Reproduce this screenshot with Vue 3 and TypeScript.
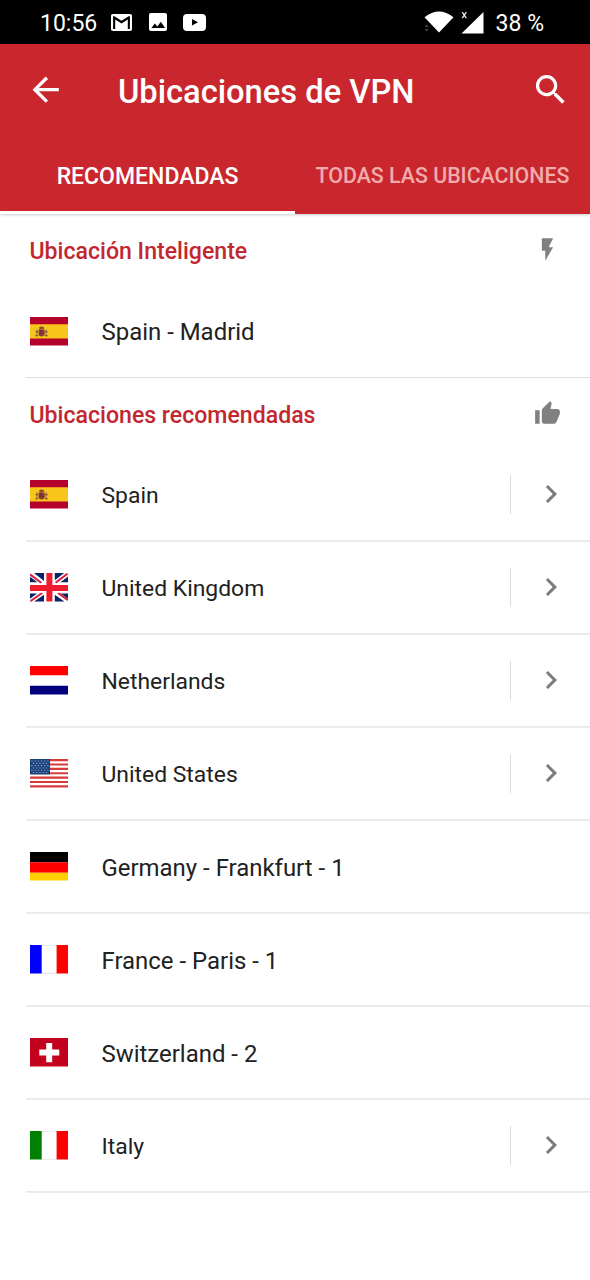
<script setup lang="ts">
type Country = 'es' | 'gb' | 'nl' | 'us' | 'de' | 'fr' | 'ch' | 'it'

interface Location {
  name: string
  flag: Country
  expandable: boolean
}

interface Section {
  title: string
  icon: 'bolt' | 'thumb'
  locations: Location[]
}

const sections: Section[] = [
  {
    title: 'Ubicación Inteligente',
    icon: 'bolt',
    locations: [{ name: 'Spain - Madrid', flag: 'es', expandable: false }],
  },
  {
    title: 'Ubicaciones recomendadas',
    icon: 'thumb',
    locations: [
      { name: 'Spain', flag: 'es', expandable: true },
      { name: 'United Kingdom', flag: 'gb', expandable: true },
      { name: 'Netherlands', flag: 'nl', expandable: true },
      { name: 'United States', flag: 'us', expandable: true },
      { name: 'Germany - Frankfurt - 1', flag: 'de', expandable: false },
      { name: 'France - Paris - 1', flag: 'fr', expandable: false },
      { name: 'Switzerland - 2', flag: 'ch', expandable: false },
      { name: 'Italy', flag: 'it', expandable: true },
    ],
  },
]
</script>

<template>
  <div class="screen">
    <div class="status">
      <span class="clock">10:56</span>
      <svg class="mail" viewBox="2 4 20 16" preserveAspectRatio="none"><path d="M20 4H4c-1.1 0-2 .7-2 1.6v12.8c0 .9.9 1.6 2 1.6h16c1.1 0 2-.7 2-1.6V5.6c0-.9-.9-1.6-2-1.6zm0 14h-2V9.25L12 13 6 9.25V18H4V6h1.2l6.8 4.25L18.8 6H20v12z" fill="#fff" /></svg>
      <svg class="photo" viewBox="0 0 18 18"><rect width="18" height="18" rx="2" fill="#fff" /><path d="M2.4 15l3.4-4.5 2.6 3 3.4-4.7 4.3 6.2z" fill="#000" /></svg>
      <svg class="video" viewBox="0 0 23 17"><rect width="23" height="17" rx="4" fill="#fff" /><path d="M9 5l6 3.3L9 11.6z" fill="#000" /></svg>
      <span class="spacer"></span>
      <svg class="wifi" viewBox="0 0 30 22"><path d="M0.5 6.2Q15-5.2 29.5 6.2L15 21.5z" fill="#fff" /><path d="M.8 16l2-2.5 2 2.5zM.8 18l2 2.5 2-2.5z" fill="#444" /></svg>
      <svg class="signal" viewBox="0 0 23 23"><path d="M22.5 1v21.5H0.5z" fill="#fff" /><path d="M1.3 1.2l4 6M5.3 1.2l-4 6" stroke="#eee" stroke-width="1.3" /></svg>
      <span class="battery">38 %</span>
    </div>

    <header class="header">
      <div class="toolbar">
        <svg class="nav-icon" viewBox="0 0 24 24"><path d="M20 11H7.83l5.59-5.59L12 4l-8 8 8 8 1.41-1.41L7.83 13H20v-2z" fill="#fff" /></svg>
        <h1 class="title">Ubicaciones de VPN</h1>
        <svg class="nav-icon" viewBox="0 0 24 24"><path d="M15.5 14h-.79l-.28-.27C15.41 12.59 16 11.11 16 9.5 16 5.91 13.09 3 9.5 3S3 5.91 3 9.5 5.91 16 9.5 16c1.61 0 3.09-.59 4.23-1.57l.27.28v.79l5 4.99L20.49 19l-4.99-5zm-6 0C7.01 14 5 11.99 5 9.5S7.01 5 9.5 5 14 7.01 14 9.5 11.99 14 9.5 14z" fill="#fff" /></svg>
      </div>
      <nav class="tabs">
        <div class="tab active">RECOMENDADAS</div>
        <div class="tab">TODAS LAS UBICACIONES</div>
      </nav>
    </header>

    <main class="content">
      <section v-for="section in sections" :key="section.title" :class="section.icon">
        <div class="section-head">
          <h2>{{ section.title }}</h2>
          <svg class="section-icon" viewBox="0 0 24 24">
            <path v-if="section.icon === 'bolt'" d="M7 2v11h3v9l7-12h-4l4-8z" fill="#808080" />
            <path v-else d="M1 21h4V9H1v12zm22-11c0-1.1-.9-2-2-2h-6.31l.95-4.57.03-.32c0-.41-.17-.79-.44-1.06L14.17 1 7.59 7.59C7.22 7.95 7 8.45 7 9v10c0 1.1.9 2 2 2h9c.83 0 1.54-.5 1.84-1.22l3.02-7.05c.09-.23.14-.47.14-.73v-2z" fill="#808080" />
          </svg>
        </div>
        <div v-for="location in section.locations" :key="location.name" class="row" :class="{ expandable: location.expandable }">
          <svg class="flag" viewBox="0 0 38 28" preserveAspectRatio="none">
            <g v-if="location.flag === 'es'">
              <path d="M0 0h38v28H0z" fill="#b5002b" /><path d="M0 7h38v14H0z" fill="#f8c51c" />
              <path d="M6.2 12h1.4v6.4H6.2zM15.4 12h1.4v6.4h-1.4z" fill="#a9854c" />
              <path d="M8.5 12.2h6.2V16q0 3.2-3.1 3.2T8.5 16z" fill="#983a34" />
              <path d="M9 10.2q2.6-1.6 5.2 0l-.6 1.8h-4z" fill="#8a4a34" />
              <path d="M10 13h2v2h-2zM12.4 15.4h1.6V17h-1.6zM9.2 16h1.6v1.4H9.2z" fill="#4e3342" />
              <path d="M5.5 18.4h2.6M15 18.4h2.6M5.6 14.6h2.4M15.2 14.6h2.4" stroke="#5d4040" stroke-width="1" />
            </g>
            <g v-else-if="location.flag === 'gb'">
              <path d="M0 0h38v28H0z" fill="#fff" />
              <path d="M4 0h10v7.8zM24.8 0h9.4l-9.4 7.2zM0 3.6L7.4 9.2H0zM38 3.4v5.8h-7.6zM0 20.2h7.2L0 25.2zM38 20.2v5.2l-7.2-5.2zM14 21.4V28H4.2zM24.8 21.4V28h9.6z" fill="#0b2265" />
              <path d="M0 1.4L11.5 9.8M38 26.6L28 19.6M37.6.6L25.6 9.4M.4 27.6L12.4 19.4" stroke="#dc1f40" stroke-width="2" />
              <path d="M19.4 0v28M0 14.8h38" stroke="#fff" stroke-width="9.2" />
              <path d="M19.4 0v28M0 14.8h38" stroke="#ee1c2e" stroke-width="6" />
            </g>
            <g v-else-if="location.flag === 'nl'">
              <path d="M0 0h38v28H0z" fill="#fff" /><path d="M0 0h38v9H0z" fill="#f00" /><path d="M0 19.3h38V28H0z" fill="#00007f" />
            </g>
            <g v-else-if="location.flag === 'us'">
              <path d="M0 0h38v28H0z" fill="#fff" />
              <path d="M0 1.08h38M0 5.38h38M0 9.69h38M0 14h38M0 18.31h38M0 22.61h38M0 26.92h38" stroke="#d83a3a" stroke-width="2.15" />
              <path d="M0 0h20v15.1H0z" fill="#18407c" />
              <path d="M1.4 2h18M1.4 6.5h18M1.4 11h18" stroke="#b9cbe0" stroke-width="1" stroke-dasharray="1 2.2" />
              <path d="M3 4.3h16M3 8.8h16M3 13.2h16" stroke="#b9cbe0" stroke-width="1" stroke-dasharray="1 2.2" />
            </g>
            <g v-else-if="location.flag === 'de'">
              <path d="M0 0h38v10H0z" fill="#000" /><path d="M0 10h38v10.3H0z" fill="#f00" /><path d="M0 20.3h38V28H0z" fill="#ffcf00" />
            </g>
            <g v-else-if="location.flag === 'ch'">
              <path d="M0 0h38v28H0z" fill="#c4001f" /><path d="M19.2 4.8v19M9.3 14.3h20" stroke="#fff" stroke-width="6" />
            </g>
            <g v-else>
              <path d="M0 0h38v28H0z" fill="#fff" /><path d="M11 .25h16M11 27.75h16" stroke="#ccc" stroke-width=".5" />
              <path d="M0 0h11.7v28H0z" :fill="location.flag === 'fr' ? '#00f' : '#008000'" />
              <path d="M26.6 0H38v28H26.6z" fill="#f00" />
            </g>
          </svg>
          <span class="name">{{ location.name }}</span>
          <div v-if="location.expandable" class="expand">
            <svg class="chevron" viewBox="0 0 24 24"><path d="M10 6L8.59 7.41 13.17 12l-4.58 4.59L10 18l6-6z" fill="#7c7c7c" /></svg>
          </div>
        </div>
      </section>
    </main>
  </div>
</template>

<style>
html,
body {
  background: #fff;
}
</style>

<style scoped>
.screen {
  width: 590px;
  height: 1280px;
  overflow: hidden;
  background: #fff;
  color: #212121;
  font-family: Roboto, sans-serif;
}
.status {
  display: flex;
  align-items: center;
  box-sizing: border-box;
  height: 44px;
  padding: 0 46px 0 40px;
  background: #000;
  color: #fff;
  font-size: 23px;
}
.clock,
.battery { padding-top: 2px; }
.spacer { flex: 1; }
.mail { width: 21px; height: 17px; margin-left: 14px; }
.photo { width: 18px; height: 18px; margin-left: 17px; }
.video { width: 23px; height: 17px; margin-left: 16px; }
.wifi { width: 30px; height: 22px; margin-right: 7px; }
.signal { width: 23px; height: 23px; margin-right: 12px; }
.header {
  position: relative;
  height: 170px;
  background: #c9272d;
  color: #fff;
  box-shadow: 0 1px 3px rgba(0, 40, 50, 0.22);
}
.toolbar {
  display: flex;
  align-items: center;
  box-sizing: border-box;
  height: 92px;
  padding: 0 20px 0 26px;
}
.nav-icon { width: 39.4px; height: 39.4px; flex: none; }
.title {
  flex: 1;
  margin: 3px 0 0 52.5px;
  font-size: 32.7px;
  font-weight: 500;
  line-height: 40px;
  white-space: nowrap;
}
.tabs { display: flex; height: 78px; }
.tab {
  box-sizing: border-box;
  width: 295px;
  padding-top: 25px;
  color: #f0acad;
  border-bottom: 3px solid transparent;
  font-size: 21.35px;
  font-weight: 500;
  line-height: 30px;
  text-align: center;
  white-space: nowrap;
}
.tab.active {
  padding-top: 26px;
  color: #fff;
  border-color: #fff;
  font-size: 23px;
}
.section-head {
  display: flex;
  align-items: center;
  justify-content: space-between;
  box-sizing: border-box;
  height: 71px;
  padding: 0 29px 0 29.5px;
}
.thumb .section-head { height: 70px; }
.section-head h2 {
  margin: 0;
  padding-top: 4px;
  color: #c2272f;
  font-size: 23.1px;
  font-weight: 500;
}
.section-icon { width: 27px; height: 27px; }
.row {
  display: flex;
  align-items: center;
  box-sizing: border-box;
  height: 93px;
  margin-left: 26px;
  padding-left: 4px;
  box-shadow: inset 0 -1px #e0e0e0;
}
.thumb .row { box-shadow: inset 0 -1px #e9e9e9, 0 1px #ededed; }
.flag { width: 38px; height: 28.5px; }
.name { flex: 1; margin: 3px 0 0 33.5px; font-size: 23.95px; }
.bolt .name { margin-top: 1px; }
.expandable .name { margin-top: 1px; font-size: 22.9px; }
.expand {
  display: flex;
  align-items: center;
  box-sizing: border-box;
  width: 80px;
  height: 39px;
  padding: 0 0 1px 22px;
  border-left: 1px solid #dcdcdc;
}
.chevron { width: 36px; height: 36px; }
</style>
